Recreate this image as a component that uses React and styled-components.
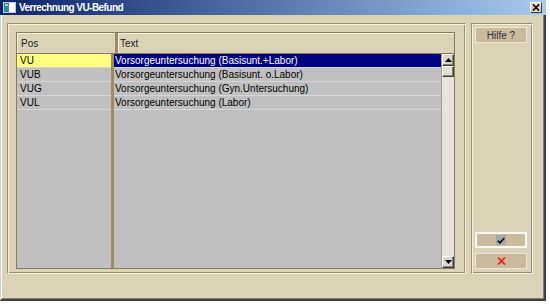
import React from "react";
import styled, { createGlobalStyle } from "styled-components";

const GlobalStyle = createGlobalStyle`
  html, body {
    margin: 0;
    padding: 0;
    background: #ffffff;
  }
  body {
    font-family: "Liberation Sans", Arial, sans-serif;
  }
`;

const rows = [
  { pos: "VU", text: "Vorsorgeuntersuchung (Basisunt.+Labor)", selected: true },
  { pos: "VUB", text: "Vorsorgeuntersuchung (Basisunt. o.Labor)" },
  { pos: "VUG", text: "Vorsorgeuntersuchung (Gyn.Untersuchung)" },
  { pos: "VUL", text: "Vorsorgeuntersuchung (Labor)" },
];

const Window = styled.div`
  width: 546px;
  height: 301px;
  display: flex;
  flex-direction: column;
  background: #dbd3b5;
`;

const TitleBar = styled.div`
  height: 15px;
  display: flex;
  align-items: center;
  padding: 0 4px 0 3px;
  background: linear-gradient(to right, #0a246a, #a6caf0);
  color: #ffffff;
`;

const Title = styled.span`
  flex: 1;
  margin-left: 3px;
  font-size: 10px;
  font-weight: bold;
  letter-spacing: -0.55px;
  white-space: nowrap;
`;

const CloseButton = styled.div`
  width: 12px;
  height: 11px;
  display: flex;
  align-items: center;
  justify-content: center;
  background: #dbd3b5;
  border-top: 1px solid #ffffff;
  border-left: 1px solid #ffffff;
  border-right: 1px solid #404040;
  border-bottom: 1px solid #404040;
  box-sizing: border-box;
`;

const Frame = styled.div`
  flex: 1;
  display: flex;
  gap: 5px;
  padding: 8px 11px 25px 6px;
  border-left: 1px solid #d4d0c8;
  border-right: 2px solid #404040;
  border-bottom: 2px solid #404040;
  box-shadow: inset 1px 0 #ffffff, inset -1px -1px #808080;
`;

const GroupBox = styled.div`
  width: ${(p) => p.$width}px;
  display: flex;
  flex-direction: column;
  gap: ${(p) => p.$gap || 0}px;
  box-sizing: border-box;
  border-top: 1px solid #9c9070;
  border-left: 1px solid #9c9070;
  border-right: 1px solid #f4f0e2;
  border-bottom: 1px solid #f4f0e2;
  box-shadow: inset 1px 1px #f4f0e2, inset -1px -1px #9c9070;
  padding: ${(p) => p.$pad};
`;

const Grid = styled.div`
  flex: 1;
  display: flex;
  flex-direction: column;
  border: 1px solid #8a7c5c;
  font-size: 10px;
  color: #000000;
`;

const HeaderRow = styled.div`
  height: 21px;
  display: flex;
  box-sizing: border-box;
  border-bottom: 1px solid #8a7c5c;
  background: #dbd3b5;
`;

const HeaderCell = styled.div`
  display: flex;
  align-items: center;
  padding-left: ${(p) => p.$indent}px;
  box-shadow: inset 1px 1px #f4f0e2;
  color: #202020;
  ${(p) => (p.$width ? `width: ${p.$width}px;` : "flex: 1;")}
  ${(p) => p.$divider && "border-right: 3px solid #9c8c66;"}
`;

const BodyArea = styled.div`
  flex: 1;
  display: flex;
`;

const Column = styled.div`
  display: flex;
  flex-direction: column;
  background: #c0c0c0;
  ${(p) => (p.$width ? `width: ${p.$width}px;` : "flex: 1;")}
  ${(p) => p.$divider && "border-right: 3px solid #9c8c66;"}
`;

const Cell = styled.div`
  height: 14px;
  box-sizing: border-box;
  display: flex;
  align-items: center;
  padding-left: ${(p) => p.$indent}px;
  border-bottom: 1px solid #d6d6d6;
  white-space: nowrap;
  background: ${(p) => p.$bg || "#c0c0c0"};
  color: ${(p) => p.$fg || "#000000"};
`;

const ScrollBar = styled.div`
  width: 12px;
  display: flex;
  flex-direction: column;
  background: #e8e4da;
  border-left: 1px solid #a0a0a0;
`;

const ScrollButton = styled.div`
  height: 12px;
  box-sizing: border-box;
  display: flex;
  align-items: center;
  justify-content: center;
  background: #dcd8cc;
  border-top: 1px solid #ffffff;
  border-left: 1px solid #ffffff;
  border-right: 1px solid #404040;
  border-bottom: 1px solid #404040;
  box-shadow: inset -1px -1px #808080;
`;

const ScrollThumb = styled(ScrollButton)`
  height: 11px;
  background: #e4e0d6;
`;

const ScrollTrack = styled.div`
  flex: 1;
`;

const Spacer = styled.div`
  flex: 1;
`;

const ActionButton = styled.div`
  height: 16px;
  box-sizing: border-box;
  display: flex;
  align-items: center;
  justify-content: center;
  background: #cbbb9d;
  border: ${(p) => (p.$default ? "2px solid #fbfaf4" : "1px solid #eee8d6")};
  font-size: 10px;
  color: #303030;
`;

const CheckBox = styled.span`
  width: 10px;
  height: 10px;
  display: flex;
  align-items: center;
  justify-content: center;
  background: #a9a9a9;
`;

function WindowIcon() {
  return (
    <svg width="13" height="11" viewBox="0 0 13 11">
      <rect x="0.5" y="0.5" width="12" height="10" fill="#ffffff" stroke="#c8c8c8" />
      <rect x="1" y="1" width="5" height="9" fill="#2e8aa4" />
      <rect x="7" y="2" width="5" height="7" fill="#ffffff" />
      <rect x="2" y="2" width="3" height="2" fill="#9fd0e0" />
    </svg>
  );
}

function CloseGlyph() {
  return (
    <svg width="8" height="7" viewBox="0 0 8 7">
      <path d="M1 0.5 L7 6.5 M7 0.5 L1 6.5" stroke="#000" strokeWidth="1.6" />
    </svg>
  );
}

function Arrow({ down }) {
  return (
    <svg width="7" height="4" viewBox="0 0 7 4">
      <path d={down ? "M0 0 H7 L3.5 4 Z" : "M0 4 H7 L3.5 0 Z"} fill="#000" />
    </svg>
  );
}

export default function App() {
  return (
    <>
      <GlobalStyle />
      <Window>
        <TitleBar>
          <WindowIcon />
          <Title>Verrechnung VU-Befund</Title>
          <CloseButton>
            <CloseGlyph />
          </CloseButton>
        </TitleBar>
        <Frame>
          <GroupBox $width={459} $pad="8px 10px 4px 8px">
            <Grid>
              <HeaderRow>
                <HeaderCell $width={94} $indent={4} $divider>
                  Pos
                </HeaderCell>
                <HeaderCell $indent={2}>Text</HeaderCell>
              </HeaderRow>
              <BodyArea>
                <Column $width={94} $divider>
                  {rows.map((r) => (
                    <Cell key={r.pos} $indent={3} $bg={r.selected ? "#ffff80" : undefined}>
                      {r.pos}
                    </Cell>
                  ))}
                </Column>
                <Column>
                  {rows.map((r) => (
                    <Cell
                      key={r.pos}
                      $indent={1}
                      $bg={r.selected ? "#000080" : undefined}
                      $fg={r.selected ? "#ffffff" : undefined}
                    >
                      {r.text}
                    </Cell>
                  ))}
                </Column>
                <ScrollBar>
                  <ScrollButton>
                    <Arrow />
                  </ScrollButton>
                  <ScrollThumb />
                  <ScrollTrack />
                  <ScrollButton>
                    <Arrow down />
                  </ScrollButton>
                </ScrollBar>
              </BodyArea>
            </Grid>
          </GroupBox>
          <GroupBox $width={62} $gap={5} $pad="3px 5px 4px 3px">
            <ActionButton>Hilfe ?</ActionButton>
            <Spacer />
            <ActionButton $default>
              <CheckBox>
                <svg width="8" height="7" viewBox="0 0 8 7">
                  <path d="M0.8 3.6 L3 5.8 L7.3 1" stroke="#000" strokeWidth="1.5" fill="none" />
                </svg>
              </CheckBox>
            </ActionButton>
            <ActionButton>
              <svg width="9" height="8" viewBox="0 0 9 8">
                <path d="M1 0.5 L8 7.5 M8 0.5 L1 7.5" stroke="#ff1010" strokeWidth="1.6" />
              </svg>
            </ActionButton>
          </GroupBox>
        </Frame>
      </Window>
    </>
  );
}
